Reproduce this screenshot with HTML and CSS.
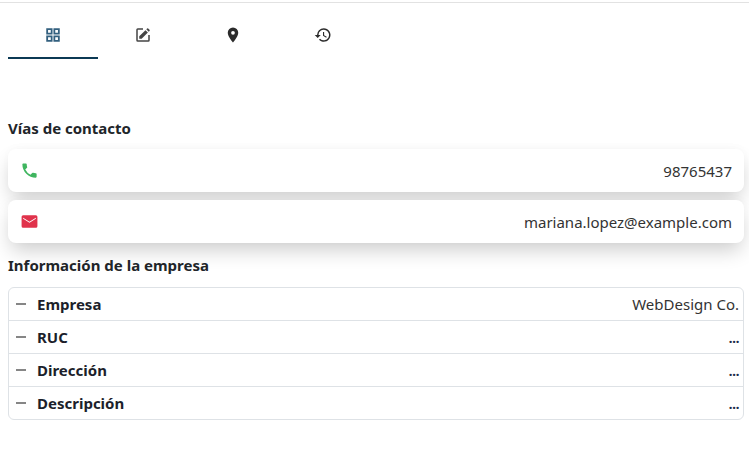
FILE: index.html
```html
<!DOCTYPE html>
<html lang="es">
<head>
<meta charset="utf-8">
<title>Contacto</title>
<link rel="stylesheet" href="styles.css">
</head>
<body>
<div class="topline"></div>
<nav class="tabs">
  <div class="tab active"><svg class="icon" viewBox="0 0 24 24"><path d="M3 3h8.4v8.4H3zM5.4 5.4v3.6h3.6V5.4zM12.6 3H21v8.4h-8.4zM15 5.4v3.6h3.6V5.4zM3 12.6h8.4V21H3zM5.4 15v3.6h3.6V15zM12.6 12.6H21V21h-8.4zM15 15v3.6h3.6V15z" fill-rule="evenodd"/></svg></div>
  <div class="tab"><svg class="icon" viewBox="0 0 24 24"><path d="M19 19H5V5h7V3H5a2 2 0 0 0-2 2v14a2 2 0 0 0 2 2h14a2 2 0 0 0 2-2v-7h-2z"/><path d="M7 17h3.2l8.3-8.3-3.2-3.2L7 13.8zM19.6 7.6l1.1-1.1a1 1 0 0 0 0-1.4l-1.8-1.8a1 1 0 0 0-1.4 0l-1.1 1.1z"/></svg></div>
  <div class="tab"><svg class="icon" viewBox="0 0 24 24"><path d="M12 2a7 7 0 0 0-7 7c0 5.25 7 13 7 13s7-7.75 7-13a7 7 0 0 0-7-7zm0 9.5a2.5 2.5 0 1 1 0-5 2.5 2.5 0 0 1 0 5z"/></svg></div>
  <div class="tab"><svg class="icon" viewBox="0 0 24 24"><path d="M13 3a9 9 0 0 0-9 9H1l3.89 3.89.07.14L9 12H6a7 7 0 1 1 2.05 4.95l-1.42 1.42A9 9 0 1 0 13 3zm-1 5v5l4.28 2.54.72-1.21-3.5-2.08V8z"/></svg></div>
</nav>
<main class="content">
  <h2 class="title first">Vías de contacto</h2>
  <div class="card">
    <svg class="card-icon phone" viewBox="0 0 24 24"><path d="M6.62 10.79a15.05 15.05 0 0 0 6.59 6.59l2.2-2.2a1 1 0 0 1 1.02-.24 11.36 11.36 0 0 0 3.57.57 1 1 0 0 1 1 1V20a1 1 0 0 1-1 1A17 17 0 0 1 3 4a1 1 0 0 1 1-1h3.5a1 1 0 0 1 1 1c0 1.25.2 2.45.57 3.57a1 1 0 0 1-.25 1.02z"/></svg>
    <span class="card-value">98765437</span>
  </div>
  <div class="card">
    <svg class="card-icon mail" viewBox="0 0 24 24"><path d="M20 4H4a2 2 0 0 0-2 2v12a2 2 0 0 0 2 2h16a2 2 0 0 0 2-2V6a2 2 0 0 0-2-2zm0 4.6-8 5-8-5V7.2l8 5 8-5z" fill-rule="evenodd"/></svg>
    <span class="card-value">mariana.lopez@example.com</span>
  </div>
  <h2 class="title second">Información de la empresa</h2>
  <div class="table">
    <div class="row"><span class="dash"></span><span class="label">Empresa</span><span class="value">WebDesign Co.</span></div>
    <div class="row"><span class="dash"></span><span class="label">RUC</span><span class="value dots">...</span></div>
    <div class="row"><span class="dash"></span><span class="label">Dirección</span><span class="value dots">...</span></div>
    <div class="row"><span class="dash"></span><span class="label">Descripción</span><span class="value dots">...</span></div>
  </div>
</main>
</body>
</html>
```

FILE: styles.css
```css
* { box-sizing: border-box; }
html, body { margin: 0; padding: 0; background: #fff; }
body { font-family: "Noto Sans", "Open Sans", sans-serif; color: #212529; height: 458px; overflow: hidden; }
.topline { height: 3px; border-bottom: 1px solid #e2e2e2; }
.tabs { display: flex; padding: 0 8px; height: 56px; }
.tab { width: 90px; display: flex; justify-content: center; align-items: center; padding-top: 10px; height: 56px; border-bottom: 2px solid transparent; }
.tab.active { border-bottom-color: #0b3954; }
.icon { width: 18px; height: 18px; fill: #2b2b2b; }
.tab:first-child .icon { fill: #33607f; }
.tab:nth-child(2) .icon { fill: #444; }
.content { padding: 0 5px 0 8px; }
.title { margin: 0; font-size: 15px; font-weight: 700; line-height: 20px; color: #212529; }
.title.first { padding-top: 59px; margin-bottom: 11px; }
.title.second { margin-top: 12px; margin-bottom: 12px; }
.card { display: flex; justify-content: space-between; align-items: center; height: 43px; padding: 0 12px; border-radius: 8px; background: #fff; box-shadow: 0 10px 20px -3px rgba(0,0,0,.2), 0 -2px 8px rgba(0,0,0,.02); margin-bottom: 8px; }
.card:last-of-type { margin-bottom: 0; }
.card-icon { width: 19px; height: 19px; }
.phone { fill: #3fb55f; }
.mail { fill: #e0324b; }
.card-value { font-size: 15px; color: #333; }
.table { border: 1px solid #dee2e6; border-radius: 6px; }
.row { display: flex; align-items: center; height: 33px; padding: 0 4px 0 7px; border-bottom: 1px solid #dee2e6; font-size: 15px; }
.row:last-child { border-bottom: 0; height: 32px; }
.dash { width: 10px; height: 2px; background: #868686; margin-right: 11px; }
.label { font-weight: 700; color: #1c1f2b; flex: 1; }
.value { color: #333; }
.dots { color: #1c2b4a; font-weight: 600; letter-spacing: -0.6px; }
```
